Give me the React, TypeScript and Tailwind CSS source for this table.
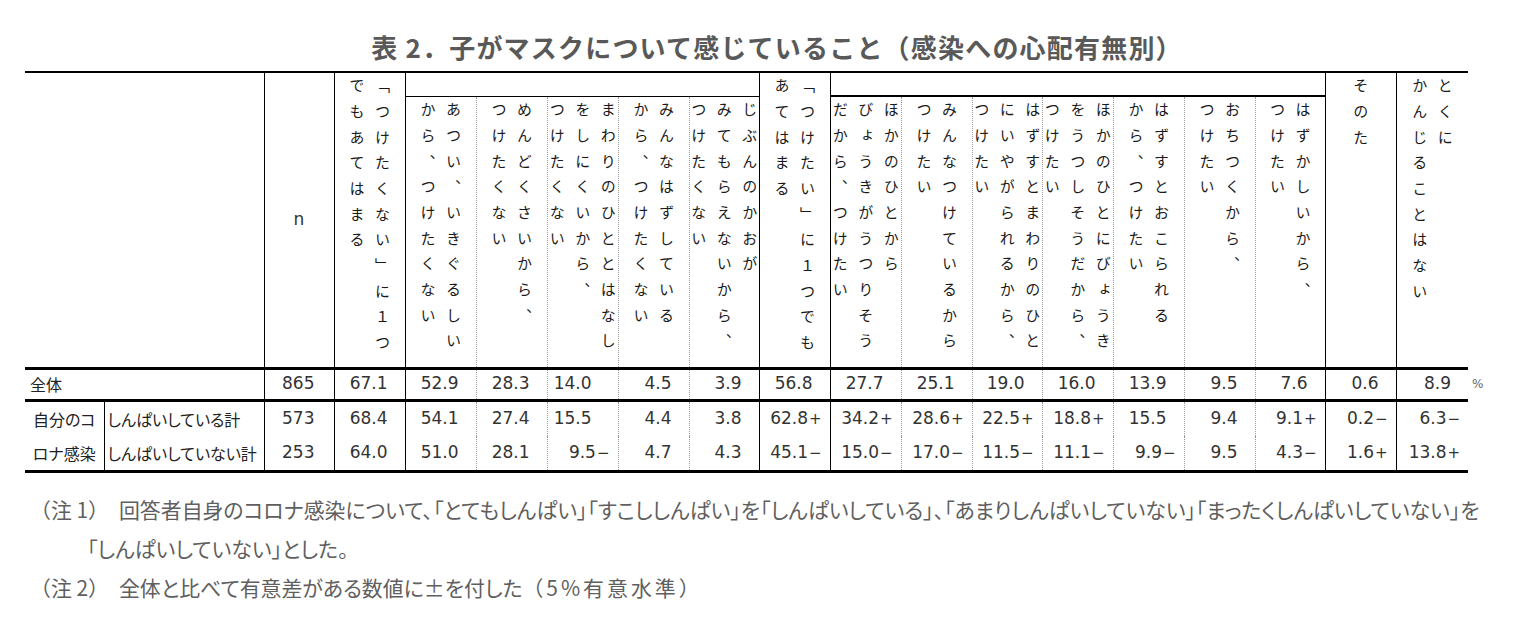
const J = "font-['Noto_Sans_CJK_JP',sans-serif]"
const D = "font-['DejaVu_Sans',sans-serif]"

const solid = 'border-l border-black'
const dot = 'border-l border-dotted border-[#9a9a9a]'

// left border of each data column (after n)
const colBorder = [solid, solid, dot, dot, dot, dot, solid, solid, dot, dot, dot, dot, dot, dot, solid, solid]

const group1 = [
	['あつい、いきぐるしい', 'から、つけたくない'],
	['めんどくさいから、', 'つけたくない'],
	['まわりのひととはなし', 'をしにくいから、', 'つけたくない'],
	['みんなはずしている', 'から、つけたくない'],
	['じぶんのかおが', 'みてもらえないから、', 'つけたくない'],
]

const group2 = [
	['ほかのひとから', 'びょうきがうつりそう', 'だから、つけたい'],
	['みんなつけているから', 'つけたい'],
	['はずすとまわりのひと', 'にいやがられるから、', 'つけたい'],
	['ほかのひとにびょうき', 'をうつしそうだから、', 'つけたい'],
	['はずすとおこられる', 'から、つけたい'],
	['おちつくから、', 'つけたい'],
	['はずかしいから、', 'つけたい'],
]

const rows = [
	{ n: '865', v: ['67.1', '52.9', '28.3', '14.0', '4.5', '3.9', '56.8', '27.7', '25.1', '19.0', '16.0', '13.9', '9.5', '7.6', '0.6', '8.9'] },
	{ n: '573', v: ['68.4', '54.1', '27.4', '15.5', '4.4', '3.8', '62.8+', '34.2+', '28.6+', '22.5+', '18.8+', '15.5', '9.4', '9.1+', '0.2−', '6.3−'] },
	{ n: '253', v: ['64.0', '51.0', '28.1', '9.5−', '4.7', '4.3', '45.1−', '15.0−', '17.0−', '11.5−', '11.1−', '9.9−', '9.5', '4.3−', '1.6+', '13.8+'] },
]

function VText({ lines }: { lines: string[] }) {
	return (
		<div className="flex justify-center items-start">
			<div className="[writing-mode:vertical-rl] whitespace-nowrap text-[15px] leading-[25.5px] tracking-[10.7px] text-[#1a1a1a]">
				{lines.map((l) => (
					<div key={l}>{l}</div>
				))}
			</div>
		</div>
	)
}

function Values({ v }: { v: string[] }) {
	return (
		<>
			{v.map((raw, i) => {
				const sign = raw.endsWith('+') || raw.endsWith('−') ? raw.slice(-1) : ''
				const num = sign ? raw.slice(0, -1) : raw
				const pad = sign ? 'pr-[8px]' : i === 3 ? 'pr-[26px]' : 'pr-[17px]'
				return (
					<td key={i} className={`${colBorder[i]} ${pad} text-right whitespace-nowrap`}>
						{num}
						{sign && <span className="text-[15px] ml-[1px]">{sign}</span>}
					</td>
				)
			})}
		</>
	)
}

export default function App() {
	return (
		<div className="w-[1517px] h-[626px] overflow-hidden bg-white pl-[25px]">
			<h1 className={`${J} pt-[30px] pl-[12px] text-center text-[26px] leading-[34px] tracking-[1.2px] font-bold text-[#595959]`}>
				表 2．子がマスクについて感じていること（感染への心配有無別）
			</h1>

			<table className={`${D} mt-[7px] table-fixed w-[1473px] text-[17px] text-[#333]`}>
				<colgroup>
					<col className="w-[79px]" />
					<col className="w-[160px]" />
					<col className="w-[70px]" />
					<col className="w-[71px]" />
					<col className="w-[71px]" />
					<col className="w-[71px]" />
					<col className="w-[71px]" />
					<col className="w-[71px]" />
					<col className="w-[70px]" />
					<col className="w-[71px]" />
					<col className="w-[71px]" />
					<col className="w-[71px]" />
					<col className="w-[70px]" />
					<col className="w-[71px]" />
					<col className="w-[71px]" />
					<col className="w-[71px]" />
					<col className="w-[70px]" />
					<col className="w-[71px]" />
					<col className="w-[72px]" />
					<col className="w-[30px]" />
				</colgroup>
				<tbody>
					<tr className="h-[24px] border-t-2 border-black">
						<td colSpan={2} rowSpan={2} />
						<td rowSpan={2} className={`${solid} text-center align-middle`}>
							n
						</td>
						<td rowSpan={2} className={`${solid} align-top pt-[5px] ${J}`}>
							<VText lines={['「つけたくない」に１つ', 'でもあてはまる']} />
						</td>
						<td colSpan={5} className="border-l border-b border-black" />
						<td rowSpan={2} className={`${solid} align-top pt-[5px] ${J}`}>
							<VText lines={['「つけたい」に１つでも', 'あてはまる']} />
						</td>
						<td colSpan={7} className="border-l border-b-2 border-black" />
						<td rowSpan={2} className={`${solid} align-top pt-[5px] ${J}`}>
							<VText lines={['そのた']} />
						</td>
						<td rowSpan={2} className={`${solid} align-top pt-[5px] ${J}`}>
							<VText lines={['とくに', 'かんじることはない']} />
						</td>
						<td rowSpan={2} className="border-hidden" />
					</tr>
					<tr className="h-[272px]">
						{group1.map((lines, i) => (
							<td key={i} className={`${i === 0 ? solid : dot} align-top pt-[5px] ${J}`}>
								<VText lines={lines} />
							</td>
						))}
						{group2.map((lines, i) => (
							<td key={i} className={`${i === 0 ? solid : dot} align-top pt-[5px] ${J}`}>
								<VText lines={lines} />
							</td>
						))}
					</tr>

					<tr className="h-[32px] border-t-[3px] border-b-[3px] border-black">
						<td colSpan={2} className={`${J} pl-[5px] text-[16px] text-[#222]`}>
							全体
						</td>
						<td className={`${solid} text-right pr-[19px]`}>{rows[0].n}</td>
						<Values v={rows[0].v} />
						<td className="border-hidden pl-[4px] text-[12px] text-[#666]">%</td>
					</tr>
					<tr className="h-[32px] border-t-[3px] border-black">
						<td rowSpan={2} className={`${J} text-center text-[16px] text-[#222] leading-[34px] [font-feature-settings:'palt']`}>
							自分のコ
							<br />
							ロナ感染
						</td>
						<td className={`${solid} ${J} pl-[3px] text-[16px] text-[#222] [font-feature-settings:'palt']`}>しんぱいしている計</td>
						<td className={`${solid} text-right pr-[19px]`}>{rows[1].n}</td>
						<Values v={rows[1].v} />
						<td className="border-hidden" />
					</tr>
					<tr className="h-[32px] border-b-[3px] border-black">
						<td className={`${solid} ${J} pl-[3px] text-[16px] text-[#222] [font-feature-settings:'palt']`}>しんぱいしていない計</td>
						<td className={`${solid} text-right pr-[19px]`}>{rows[2].n}</td>
						<Values v={rows[2].v} />
						<td className="border-hidden" />
					</tr>
				</tbody>
			</table>

			<div className={`${J} mt-[17px] pl-[5px] text-[20.9px] leading-[39px] text-[#5f5f5f] [font-feature-settings:'palt'] whitespace-nowrap`}>
				<p>
					<span className="[font-feature-settings:normal] mr-[10px]">（注 1）</span>
					回答者自身のコロナ感染について、「とてもしんぱい」「すこししんぱい」を「しんぱいしている」、「あまりしんぱいしていない」「まったくしんぱいしていない」を
				</p>
				<p className="pl-[57px]">「しんぱいしていない」とした。</p>
				<p>
					<span className="[font-feature-settings:normal] mr-[10px]">（注 2）</span>
					全体と比べて有意差がある数値に±を付した
					<span className="[font-feature-settings:normal] tracking-[3px]">（5%有意水準）</span>
				</p>
			</div>
		</div>
	)
}
